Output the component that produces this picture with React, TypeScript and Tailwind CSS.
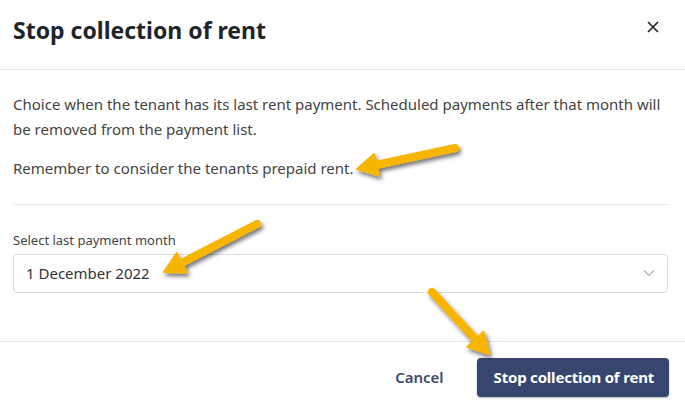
import React from 'react';

// Yellow annotation arrows drawn over the dialog
const Arrow = ({ x1, y1, x2, y2 }: { x1: number; y1: number; x2: number; y2: number }) => {
  const dx = x2 - x1;
  const dy = y2 - y1;
  const len = Math.sqrt(dx * dx + dy * dy);
  const ux = dx / len;
  const uy = dy / len;
  const head = 20;
  const half = 11;
  const bx = x2 - ux * head;
  const by = y2 - uy * head;
  const pts = `${x2},${y2} ${bx - uy * half},${by + ux * half} ${bx + uy * half},${by - ux * half}`;
  return (
    <g>
      <line x1={x1} y1={y1} x2={bx + ux * 2} y2={by + uy * 2} stroke="#f7b500" strokeWidth={8} strokeLinecap="round" />
      <polygon points={pts} fill="#f7b500" stroke="#f7b500" strokeWidth={2} strokeLinejoin="round" />
    </g>
  );
};

export default function App() {
  return (
    <div className="relative w-[685px] h-[406px] bg-white text-[#212529] font-['Noto_Sans',sans-serif] overflow-hidden">
      <div className="flex items-center justify-between h-[70px] pl-[13px] pr-[26px] pb-[8px] border-b border-[#e6e6e6]">
        <h1 className="text-[23px] font-bold">Stop collection of rent</h1>
        <svg width="12" height="12" viewBox="0 0 12 12" className="text-[#222] mb-[8px]">
          <path d="M1 1 L11 11 M11 1 L1 11" stroke="currentColor" strokeWidth="1.6" />
        </svg>
      </div>

      <div className="pl-[13px] pr-[17px] pt-[22px]">
        <p className="text-[15px] leading-[25px] text-[#444]">
          Choice when the tenant has its last rent payment. Scheduled payments after that month will be removed from the payment list.
        </p>
        <p className="mt-[14px] text-[15px] leading-[25px] text-[#444]">
          Remember to consider the tenants prepaid rent.
        </p>
        <div className="mt-[23px] border-t border-[#e6e6e6]" />
        <label className="block mt-[26px] text-[13px] text-[#444]">Select last payment month</label>
        <div className="mt-[3px] flex items-center justify-between h-[39px] px-[12px] border border-[#dcdcdc] rounded-[4px]">
          <span className="text-[15px] text-[#333]">1 December 2022</span>
          <svg width="12" height="8" viewBox="0 0 12 8">
            <path d="M1 1.5 L6 6.5 L11 1.5" fill="none" stroke="#b3b3b3" strokeWidth="1.2" />
          </svg>
        </div>
      </div>

      <div className="mt-[48px] border-t border-[#e6e6e6] flex items-center justify-end gap-[33px] pt-[16px] pr-[16px]">
        <button className="text-[15px] font-semibold text-[#3c4a6e]">Cancel</button>
        <button className="h-[39px] pl-[17px] pr-[15px] rounded-[4px] bg-[#36466f] text-white text-[15px] font-bold tracking-[-0.2px] shadow-[0_1px_2px_rgba(0,0,0,0.3)]">
          Stop collection of rent
        </button>
      </div>

      <svg className="absolute inset-0 pointer-events-none" width="685" height="406">
        <defs>
          <filter id="sh" x="-20%" y="-20%" width="140%" height="140%">
            <feDropShadow dx="2" dy="3" stdDeviation="2" floodColor="#000" floodOpacity="0.55" />
          </filter>
        </defs>
        <g filter="url(#sh)">
          <Arrow x1={455} y1={148} x2={357} y2={169} />
          <Arrow x1={257} y1={224} x2={164} y2={272} />
          <Arrow x1={432} y1={292} x2={489} y2={354} />
        </g>
      </svg>
    </div>
  );
}
